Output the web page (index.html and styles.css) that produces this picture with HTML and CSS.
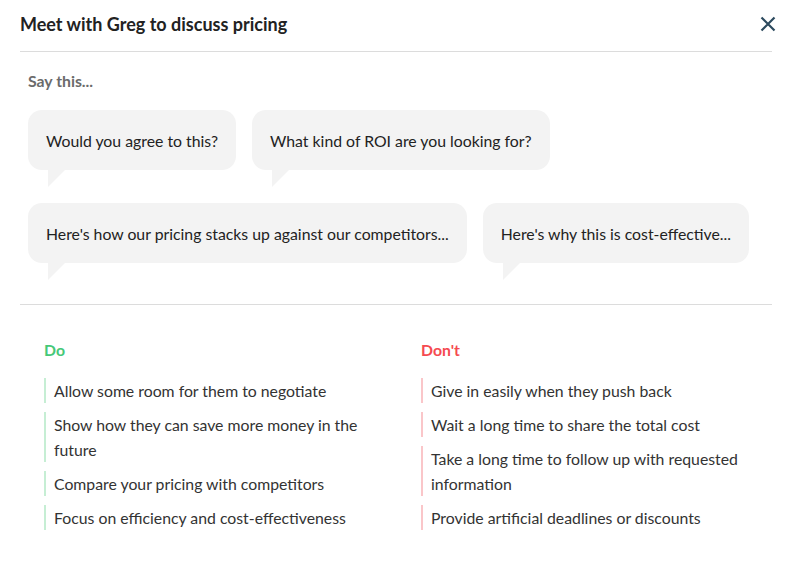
FILE: index.html
```html
<!DOCTYPE html>
<html>
<head>
<meta charset="utf-8">
<link rel="stylesheet" href="styles.css">
</head>
<body>
<div class="modal">
  <header class="header">
    <h1 class="title">Meet with Greg to discuss pricing</h1>
    <button class="close" aria-label="Close">
      <svg width="16" height="16" viewBox="0 0 16 16"><path d="M1.5 1.5 L14.5 14.5 M14.5 1.5 L1.5 14.5" stroke="#2c4a5e" stroke-width="2.2" stroke-linecap="butt" fill="none"/></svg>
    </button>
  </header>
  <section class="say">
    <div class="label">Say this...</div>
    <div class="bubbles">
      <div class="bubble">Would you agree to this?</div>
      <div class="bubble">What kind of ROI are you looking for?</div>
      <div class="bubble">Here's how our pricing stacks up against our competitors...</div>
      <div class="bubble">Here's why this is cost-effective...</div>
    </div>
  </section>
  <section class="tips">
    <div class="col do">
      <div class="heading">Do</div>
      <ul class="list">
        <li>Allow some room for them to negotiate</li>
        <li>Show how they can save more money in the future</li>
        <li>Compare your pricing with competitors</li>
        <li>Focus on efficiency and cost-effectiveness</li>
      </ul>
    </div>
    <div class="col dont">
      <div class="heading">Don't</div>
      <ul class="list">
        <li>Give in easily when they push back</li>
        <li>Wait a long time to share the total cost</li>
        <li>Take a long time to follow up with requested information</li>
        <li>Provide artificial deadlines or discounts</li>
      </ul>
    </div>
  </section>
</div>
</body>
</html>
```

FILE: styles.css
```css
* { box-sizing: border-box; }
html, body { margin: 0; padding: 0; background: #fff; }
body { font-family: Lato, "Open Sans", sans-serif; color: #222; }
.modal { padding: 0 20px; }
.header {
  height: 52px;
  display: flex;
  align-items: center;
  justify-content: space-between;
  border-bottom: 1px solid #dcdcdc;
  padding-bottom: 3px;
}
.title {
  margin: 0;
  font-size: 18px;
  font-weight: 700;
  color: #222;
  line-height: 24px;
}
.close {
  border: 0;
  background: none;
  padding: 0;
  margin-right: -4px;
  width: 16px;
  height: 16px;
  display: flex;
}
.say {
  padding: 0 0 41px 8px;
  border-bottom: 1px solid #dcdcdc;
}
.label {
  margin-top: 19px;
  margin-bottom: 19px;
  font-size: 15.8px;
  font-weight: 700;
  color: #6b6b6b;
  line-height: 20px;
}
.bubbles {
  display: flex;
  flex-wrap: wrap;
  gap: 33px 16px;
}
.bubble {
  position: relative;
  background: #f3f3f3;
  border-radius: 14px;
  padding: 21px 18px 19px;
  font-size: 15.8px;
  line-height: 20px;
  color: #222;
}
.bubble::after {
  content: "";
  position: absolute;
  left: 20px;
  top: 100%;
  width: 0;
  height: 0;
  border-top: 17px solid #f3f3f3;
  border-right: 17px solid transparent;
}
.tips {
  display: grid;
  grid-template-columns: 340px 340px;
  column-gap: 37px;
  padding: 35px 0 0 24px;
}
.heading {
  font-size: 15.8px;
  font-weight: 700;
  line-height: 20px;
  margin-bottom: 18px;
}
.do .heading { color: #46c878; }
.dont .heading { color: #f54a50; }
.list { list-style: none; margin: 0; padding: 0; }
.list li {
  font-size: 15.8px;
  line-height: 25px;
  color: #333;
  padding-left: 8px;
  margin-bottom: 9px;
  border-left: 2px solid #c6eed4;
}
.dont .list li { border-left-color: #fac6c9; }
```
